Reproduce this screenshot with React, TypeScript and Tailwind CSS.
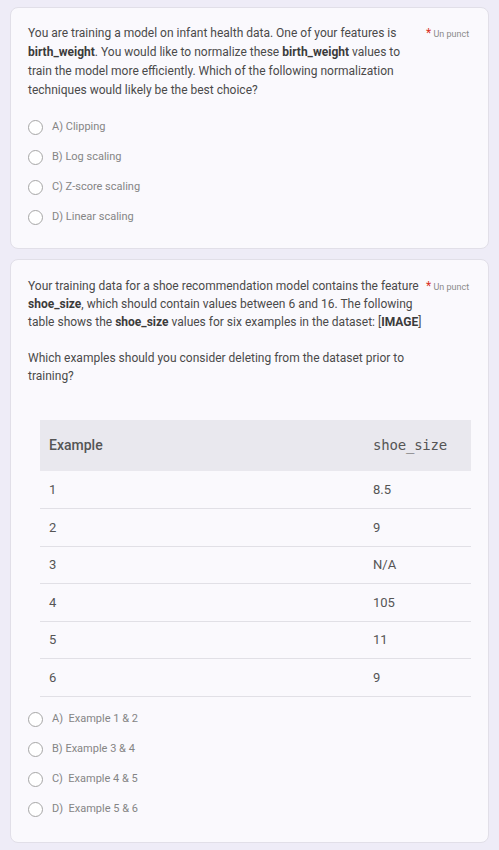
const OPTIONS_1 = ["A) Clipping", "B) Log scaling", "C) Z-score scaling", "D) Linear scaling"];
const OPTIONS_2 = ["A)  Example 1 & 2", "B) Example 3 & 4", "C)  Example 4 & 5", "D)  Example 5 & 6"];
const ROWS = [
  ["1", "8.5"],
  ["2", "9"],
  ["3", "N/A"],
  ["4", "105"],
  ["5", "11"],
  ["6", "9"],
];

function Required() {
  return (
    <div className="w-[46px] shrink-0 whitespace-nowrap text-[9px] leading-[19px] text-[#8a8a8a]">
      <span className="text-[12px] text-[#d93025]">*</span> Un punct
    </div>
  );
}

function Radio({ label }: { label: string }) {
  return (
    <label className="flex items-center gap-[9px] h-[30px]">
      <span className="w-[15px] h-[15px] rounded-full border-[1.5px] border-[#a6a6a6] bg-white shrink-0" />
      <span className="text-[11px] text-[#858585] whitespace-pre">{label}</span>
    </label>
  );
}

export default function App() {
  return (
    <div className="min-h-[850px] bg-[#eeecf7] px-[10px] pt-[7px] pb-[9px] flex flex-col gap-[10px] font-['Roboto',sans-serif] text-[#4a4a4a]">
      <section className="bg-[#faf9fd] border border-[#e1dfe8] rounded-[8px] pl-[17px] pr-[16px] pt-[16px] pb-[16px]">
        <div className="flex gap-[8px]">
          <p className="flex-1 text-[12px] leading-[19px]">
            You are training a model on infant health data. One of your features is{" "}
            <b className="font-bold text-[#3b3b3b]">birth_weight</b>. You would like to normalize these{" "}
            <b className="font-bold text-[#3b3b3b]">birth_weight</b> values to train the model more
            efficiently. Which of the following normalization techniques would likely be the best
            choice?
          </p>
          <Required />
        </div>
        <div className="mt-[12px] flex flex-col">
          {OPTIONS_1.map((o) => (
            <Radio key={o} label={o} />
          ))}
        </div>
      </section>

      <section className="bg-[#faf9fd] border border-[#e1dfe8] rounded-[8px] pl-[17px] pr-[16px] pt-[17px] pb-[17px]">
        <div className="flex">
          <div className="flex-1 text-[12px] leading-[18px]">
            <p>
              Your training data for a shoe recommendation model contains the feature{" "}
              <b className="font-bold text-[#3b3b3b]">shoe_size</b>, which should contain values between 6
              and 16. The following table shows the <b className="font-bold text-[#3b3b3b]">shoe_size</b>{" "}
              values for six examples in the dataset: [<b className="font-bold text-[#3b3b3b]">IMAGE</b>]
            </p>
            <p className="mt-[18px]">
              Which examples should you consider deleting from the dataset prior to training?
            </p>
          </div>
          <Required />
        </div>

        <table className="mt-[35px] ml-[12px] w-[431px] border-collapse text-[#555]">
          <thead>
            <tr className="bg-[#e9e8ee] h-[51px]">
              <th className="text-left font-medium text-[14px] pl-[9px]">Example</th>
              <th className="text-left font-normal text-[14px] w-[98px] font-['DejaVu_Sans_Mono',monospace] tracking-[-0.2px]">
                shoe_size
              </th>
            </tr>
          </thead>
          <tbody>
            {ROWS.map(([a, b]) => (
              <tr key={a} className="h-[37.5px] border-b-[1.5px] border-[#e1e0e6]">
                <td className="pl-[9px] text-[13px]">{a}</td>
                <td className="text-[13px]">{b}</td>
              </tr>
            ))}
          </tbody>
        </table>

        <div className="mt-[8px] flex flex-col">
          {OPTIONS_2.map((o) => (
            <Radio key={o} label={o} />
          ))}
        </div>
      </section>
    </div>
  );
}
